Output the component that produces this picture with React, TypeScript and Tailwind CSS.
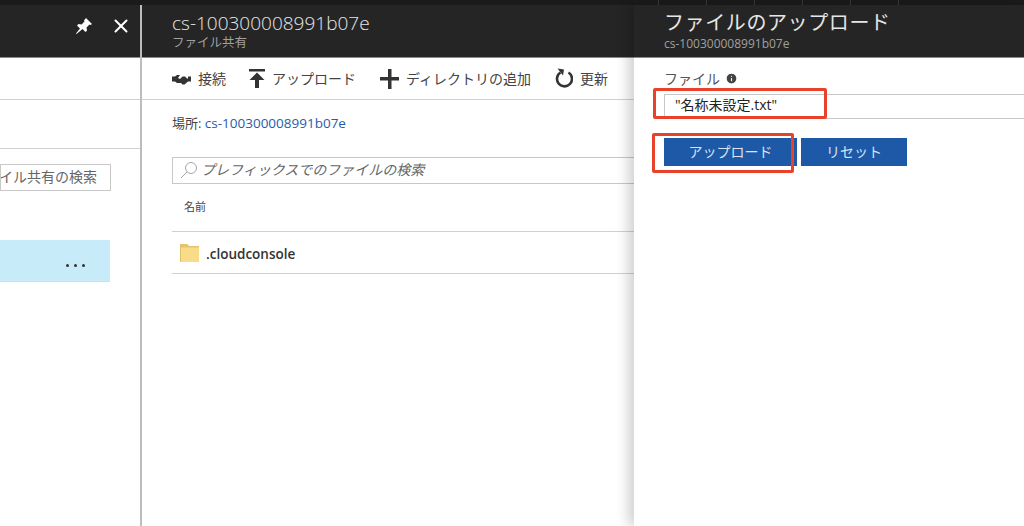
import type { ReactNode } from 'react'
import { Info, X } from 'lucide-react'

const SHARE = 'cs-100300008991b07e'

function PinIcon() {
  return (
    <svg width="18" height="18" viewBox="0 0 18 18" fill="white">
      <path d="M11 1l6 6-1.500 1-1-.5-3 3 .5 3-1.500 1.500-3-3L1.500 17 1 16.500 5 11.500l-3-3L3.500 7l3 .5 3-3-.5-1z" />
    </svg>
  )
}

function ConnectIcon() {
  return (
    <svg width="19" height="12" viewBox="0 0 19 12" fill="#333">
      <path d="M0 3.500h3l2-1.500h3l-2 3 2 1 2.500-2.500H13l2 2h1V3.500h3v5h-3l-3.500 3h-2L9 10H5L3 8.500H0z" />
    </svg>
  )
}

function UploadIcon() {
  return (
    <svg width="16" height="19" viewBox="0 0 16 19" fill="#333">
      <rect x="0" y="0" width="16" height="2.500" />
      <path d="M8 3.500l7.500 7.500h-5.500v8h-4v-8H.5z" />
    </svg>
  )
}

function PlusIcon() {
  return (
    <svg width="20" height="20" viewBox="0 0 20 20" fill="#333">
      <path d="M9 0h3.500v8H20v3.500h-7.500V20H9v-8.500H1V8h8z" />
    </svg>
  )
}

function RefreshIcon() {
  return (
    <svg width="19" height="21" viewBox="0 0 19 21" fill="none">
      <path d="M6.500 4.500a7.500 7.500 0 1 0 8 0" stroke="#333" strokeWidth="2.600" />
      <path d="M3.500 0.500l6.500 1-1 6z" fill="#333" />
    </svg>
  )
}

function MagnifierIcon() {
  return (
    <svg width="18" height="18" viewBox="0 0 18 18" fill="none" stroke="#a8a8a8" strokeWidth="1">
      <circle cx="11" cy="7" r="5.500" />
      <path d="M7 11l-6 6" />
    </svg>
  )
}

function FolderIcon() {
  return (
    <svg width="19" height="18" viewBox="0 0 19 18">
      <path d="M0 0h7l2 2h10v16H0z" fill="#f8dc88" />
      <path d="M0 0h7l2 2h10v1.500H0z" fill="#e4c56e" />
      <path d="M0 0h1v18H0z" fill="#e0c06a" />
    </svg>
  )
}

function ToolbarItem({ icon, label }: { icon: ReactNode; label: string }) {
  return (
    <div className="flex items-center gap-[7px]">
      {icon}
      <span className="text-[14px] text-[#444]">{label}</span>
    </div>
  )
}

export default function App() {
  return (
    <div className="flex h-[526px] w-[1024px] flex-col overflow-hidden bg-white font-['Open_Sans','Noto_Sans_CJK_JP',sans-serif]">
      <div className="flex h-[5px] shrink-0 bg-[#1b1b1b] pl-[658px]">
        {[0, 1, 2, 3, 4, 5].map((i) => (
          <div key={i} className="h-full w-[48px] border-l border-[#3a3a3a]" />
        ))}
      </div>

      <div className="flex min-h-0 flex-1">
        {/* left blade */}
        <div className="flex w-[140px] shrink-0 flex-col">
          <div className="flex h-[53px] items-center justify-end gap-[17px] border-b border-[#8a8a8a] bg-[#252525] pr-[8px] pb-[10px]">
            <PinIcon />
            <X size={22} strokeWidth={2.2} className="text-white" />
          </div>
          <div className="h-[42px] border-b border-[#d0d0d0]" />
          <div className="h-[49px] border-b border-[#d0d0d0]" />
          <div className="mt-[15px] flex h-[27px] w-[111px] items-center justify-end overflow-hidden border border-[#c8c8c8] pr-[13px] pb-[2px]">
            <span className="whitespace-nowrap text-[14px] text-[#666]">イル共有の検索</span>
          </div>
          <div className="mt-[49px] flex h-[42px] w-[110px] items-center justify-end gap-[5px] border-b border-[#dcdcdc] bg-[#c7ebf8] pt-[10px] pr-[25px]">
            <span className="size-[3px] rounded-full bg-[#333]" />
            <span className="size-[3px] rounded-full bg-[#333]" />
            <span className="size-[3px] rounded-full bg-[#333]" />
          </div>
        </div>

        <div className="w-[2px] shrink-0 bg-[#bdbdbd]" />

        {/* file share blade */}
        <div className="flex min-w-0 flex-1 flex-col">
          <div className="flex h-[53px] flex-col justify-center border-b border-[#8a8a8a] bg-[#252525] pl-[30px]">
            <div className="text-[19px] leading-[24px] font-light text-[#e6e6e6]">{SHARE}</div>
            <div className="text-[12.500px] leading-[16px] text-[#a0a0a0]">ファイル共有</div>
          </div>
          <div className="flex h-[42px] items-center gap-[23px] border-b border-[#d0d0d0] pl-[30px]">
            <ToolbarItem icon={<ConnectIcon />} label="接続" />
            <ToolbarItem icon={<UploadIcon />} label="アップロード" />
            <ToolbarItem icon={<PlusIcon />} label="ディレクトリの追加" />
            <ToolbarItem icon={<RefreshIcon />} label="更新" />
          </div>
          <div className="px-[30px] pt-[14px] text-[13px] leading-[18px] text-[#444]">
            場所: <span className="text-[13.500px] text-[#1f5dab]">{SHARE}</span>
          </div>
          <div className="mt-[25px] mr-[-40px] ml-[30px] flex h-[27px] items-center gap-[3px] border border-[#c8c8c8] pb-[2px] pl-[7px]">
            <MagnifierIcon />
            <span className="text-[14px] italic text-[#666]">プレフィックスでのファイルの検索</span>
          </div>
          <div className="ml-[30px] flex h-[48px] items-center border-b border-[#d0d0d0] pl-[12px] text-[11px] text-[#444]">
            名前
          </div>
          <div className="ml-[30px] flex h-[42px] items-center gap-[7px] border-b border-[#d0d0d0] pl-[8px]">
            <FolderIcon />
            <span className="pt-[3px] text-[13.500px] font-semibold text-[#333]">.cloudconsole</span>
          </div>
        </div>

        {/* upload panel */}
        <div className="relative z-10 flex w-[390px] shrink-0 flex-col bg-white shadow-[-6px_0_12px_rgba(0,0,0,0.18)]">
          <div className="flex h-[53px] flex-col justify-center border-b border-[#8a8a8a] bg-[#252525] pb-[1px] pl-[30px]">
            <div className="text-[20px] leading-[26px] tracking-[0.6px] text-[#e6e6e6]">ファイルのアップロード</div>
            <div className="text-[12px] leading-[15px] text-[#a0a0a0]">{SHARE}</div>
          </div>
          <div className="flex flex-col pt-[10px] pl-[30px]">
            <div className="flex h-[20px] items-center gap-[5px] text-[14px] text-[#555]">
              ファイル
              <Info size={13} className="text-white" fill="#444" />
            </div>
            <div className="relative mt-[6px] mr-[-2px] flex h-[25px] items-center border border-[#c8c8c8] pb-[5px] pl-[10px] text-[14px] text-[#222]">
              "名称未設定.txt"
              <div className="absolute top-[-7px] left-[-12px] h-[31px] w-[174px] rounded-[2px] border-[3px] border-[#e8432a]" />
            </div>
            <div className="relative mt-[19px] flex gap-[4px]">
              <button className="flex h-[28px] w-[133px] items-center justify-center bg-[#1e59a8] pb-[2px] text-[14px] text-[#d8e4f2]">
                アップロード
              </button>
              <button className="flex h-[28px] w-[106px] items-center justify-center bg-[#1e59a8] pb-[2px] text-[14px] text-[#d8e4f2]">
                リセット
              </button>
              <div className="absolute top-[-5px] left-[-12px] h-[40px] w-[142px] rounded-[2px] border-[3px] border-[#e8432a]" />
            </div>
          </div>
        </div>
      </div>
    </div>
  )
}
